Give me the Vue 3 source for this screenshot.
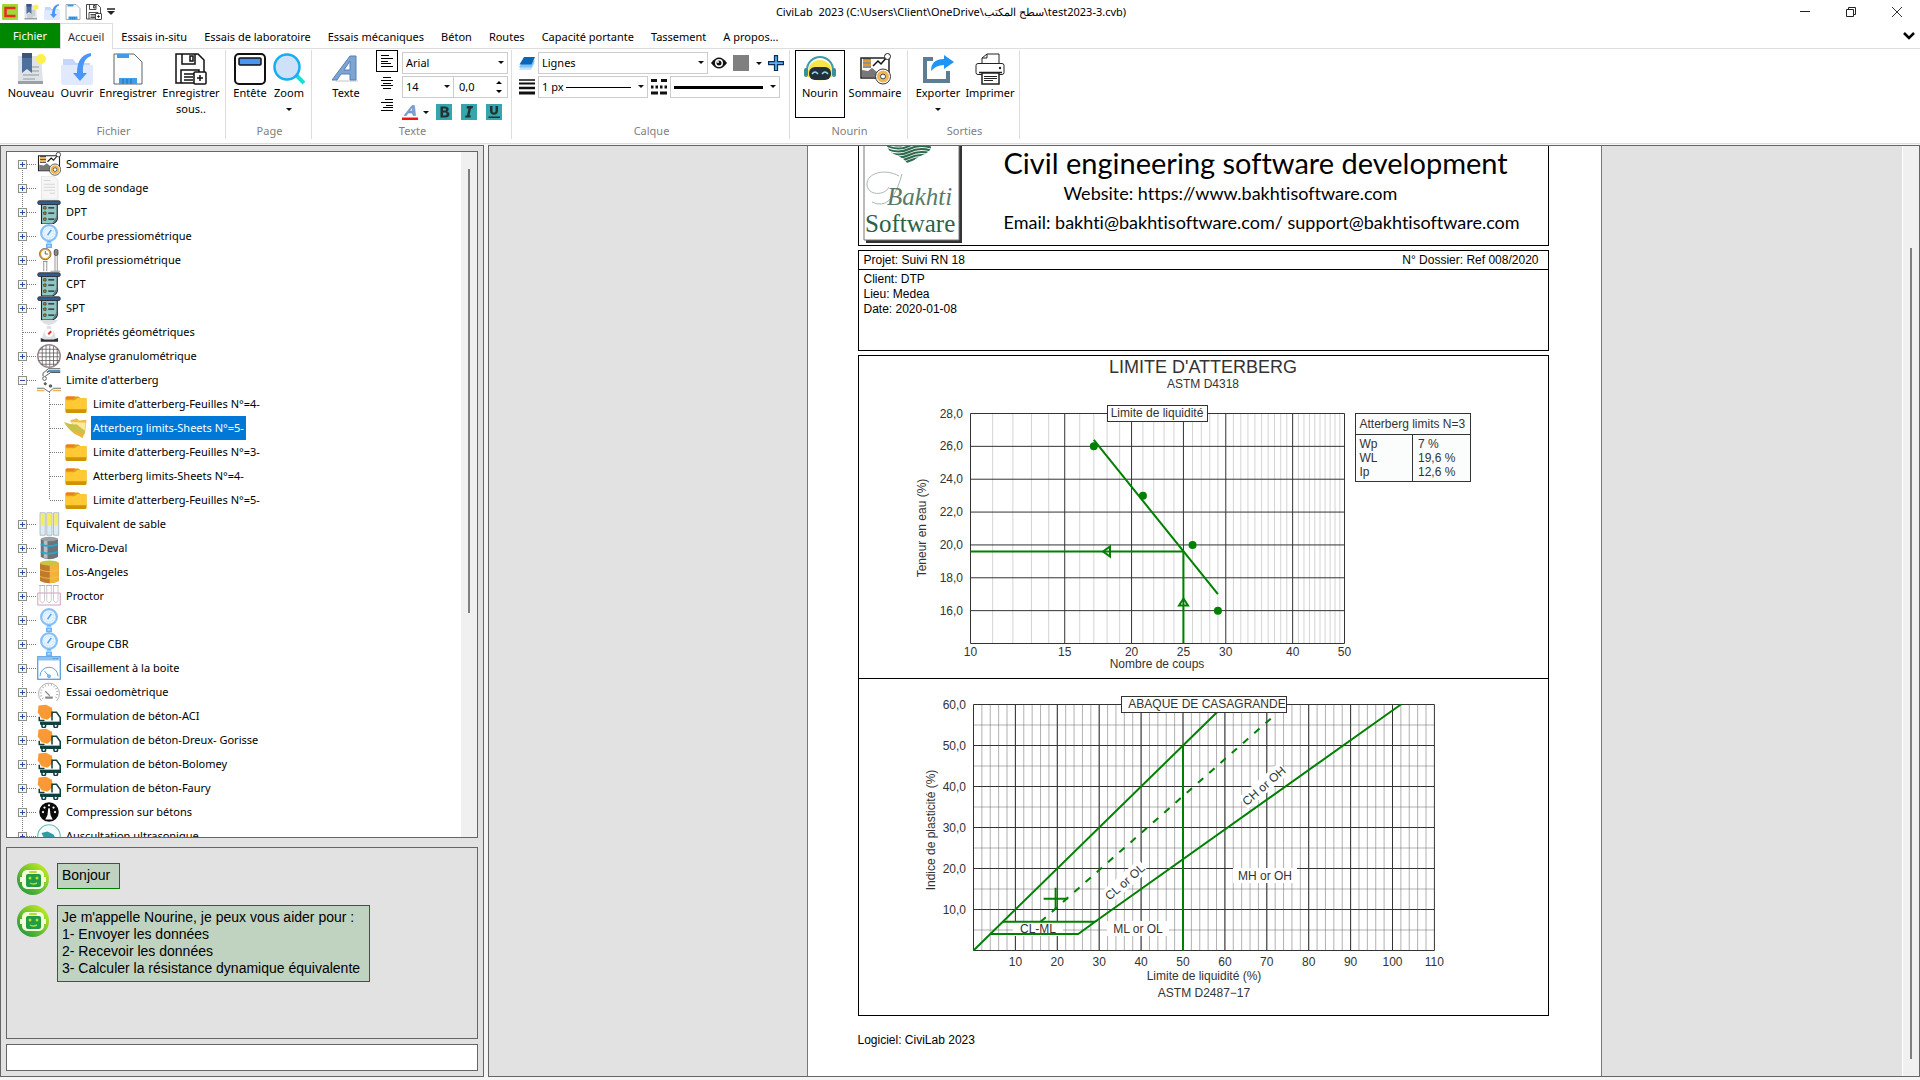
<script setup>
import { ref } from 'vue'

const icons = {
  app: '<rect width="32" height="32" rx="2" fill="#9fd83a"/><path d="M27 8H7v16h20" fill="none" stroke="#ee2a1c" stroke-width="5"/>',
  doc: '<path d="M3 29V3h23l2 26z" fill="#dfe2e6"/><path d="M3 28h25v3H3z" fill="#9aa0a6"/><path d="M17 14h7M17 18h7M8 22h16M8 26h12" stroke="#b9bec4" stroke-width="2"/><path d="M7 0h10v20l-5-4-5 4z" fill="#4f6f9d"/><path d="M7 0h10v5H7z" fill="#3b557e"/><circle cx="26" cy="6" r="5" fill="#fff04a"/>',
  open: '<path d="M2 6h10l3 4h14v6H2z" fill="#c4d6fb"/><path d="M0 12h32v17q0 3-3 3H3q-3 0-3-3z" fill="#e0e9fd"/><path d="M30 0Q16 2 16 20h-4l7 8 7-8h-4Q21 6 30 3z" fill="#4a95f7"/>',
  save: '<path d="M2 1h20l8 8v22H2z" fill="#fdfdfd" stroke="#5b6570" stroke-width="1"/><path d="M5 1h12v4H5z" fill="#3f9ce8"/><path d="M7 31v-6h18v6z" fill="#3f9ce8"/><path d="M11 26v5M15 26v5M19 26v5" stroke="#2b6ea8"/>',
  saveas: '<path d="M1 1h22l6 6v23H1z" fill="#fff" stroke="#111" stroke-width="1.500"/><path d="M7 1v10h13V1M15 3v5h3V3zM6 30V17h18v4M9 21h10M9 24h9M9 27h9" fill="none" stroke="#111" stroke-width="1.500"/><rect x="19" y="19" width="12" height="12" rx="1" fill="#fff" stroke="#111" stroke-width="1.500"/><path d="M25 22v6M22 25h6" stroke="#111" stroke-width="1.500"/>',
  entete: '<rect x="1" y="1" width="30" height="30" rx="4" fill="#fff" stroke="#111" stroke-width="2"/><rect x="5" y="5" width="22" height="7" rx="1" fill="#4a96ef" stroke="#111" stroke-width="1.500"/>',
  zoom: '<path d="M23 22l8 8" stroke="#0fe3d8" stroke-width="4"/><circle cx="14" cy="14" r="12.500" fill="#cfe1f8" stroke="#16aef0" stroke-width="2.500"/>',
  texte: '<path d="M6 28h22" stroke="#e2e2e2" stroke-width="2"/><path d="M2 27L20 3h6v24h-6v-6h-9l-4 6zM14 17h6V8z" fill="#7ea4d3" stroke="#5480b5" stroke-width="1"/>',
  color: '<path d="M4 23L20 3h5l2 20h-5l-1-5h-9l-3 5zM15 14h6l-1-7z" fill="#7da3d3" stroke="#5480b5"/><path d="M0 27h32v5H0z" fill="#f4160e"/>',
  bold: '<rect width="32" height="32" fill="#35a5ae"/><path d="M9 5h9c9 0 9 9 4 10 7 1 7 12-3 12H9zM14 9v4h4c3 0 3-4 0-4zM14 17v6h5c3 0 3-6 0-6z" fill="#233" fill-rule="evenodd"/>',
  italic: '<rect width="32" height="32" fill="#35a5ae"/><path d="M12 4h12l-1 5h-3l-3 14h3l-1 4H8l1-4h3l3-14h-4z" fill="#233"/>',
  under: '<rect width="32" height="32" fill="#35a5ae"/><path d="M8 4v10c0 10 16 10 16 0V4h-5v10c0 4-6 4-6 0V4zM5 25h23v3H5z" fill="#233"/>',
  layers: '<path d="M8 16h24l-8 14H0z" fill="#c3e4fb"/><path d="M8 11h24l-7 14H0z" fill="#7dc3f4"/><path d="M10 4h22l-7 15H1z" fill="#0d66b5"/>',
  weight: '<path d="M0 2h32" stroke="#111" stroke-width="3"/><path d="M0 9h32" stroke="#111" stroke-width="4"/><path d="M0 18h32" stroke="#111" stroke-width="5"/><path d="M0 28h32" stroke="#111" stroke-width="6"/>',
  dashes: '<path d="M0 3h12M20 3h12M0 28h14M18 28h14" stroke="#111" stroke-width="6"/><path d="M0 16h32" stroke="#111" stroke-width="6" stroke-dasharray="5 4"/>',
  eye: '<path d="M0 16Q16-6 32 16 16 38 0 16z" fill="#111"/><circle cx="16" cy="16" r="8" fill="#fff"/><circle cx="16" cy="16" r="5" fill="#111"/><circle cx="14" cy="14" r="2" fill="#fff"/>',
  plus: '<path d="M13 1h6v12h12v6H19v12h-6V19H1v-6h12z" fill="#5bb0f5" stroke="#0e2f55" stroke-width="2.500"/>',
  bot: '<path d="M4 19a12 12 0 0 1 24 0v5q-12 7-24 0z" fill="#fbe34c"/><path d="M3 17a13 13 0 0 1 26 0" fill="none" stroke="#3b9da6" stroke-width="2"/><rect x="0" y="15" width="4" height="9" rx="2" fill="#3b8f98"/><rect x="28" y="15" width="4" height="9" rx="2" fill="#3b8f98"/><rect x="5" y="14" width="22" height="13" rx="6" fill="#22303c"/><path d="M8 21q3-4 6 0M18 21q3-4 6 0" fill="none" stroke="#9fd5e6" stroke-width="1.500"/>',
  summary: '<path d="M2 5h28v20H2z" fill="#fff" stroke="#222" stroke-width="1.500"/><path d="M3 17l6 1 4-3 5 4v5H3z" fill="#777"/><path d="M4 8h8M4 12h8" stroke="#e59a2f" stroke-width="2"/><path d="M4 6h8M4 10h8M4 14h8" stroke="#222" stroke-width="1"/><path d="M14 13l5-5 3 3 6-7" fill="none" stroke="#111" stroke-width="1.500"/><circle cx="28.500" cy="3.500" r="3" fill="#fff" stroke="#222"/><circle cx="24" cy="23.500" r="7.500" fill="#fff" stroke="#333" stroke-width="1"/><circle cx="24" cy="23.500" r="4.500" fill="none" stroke="#f2b44d" stroke-width="3"/><circle cx="24" cy="23.500" r="2.500" fill="#fff" stroke="#333"/>',
  export: '<path d="M11 6H3v22h23V18" fill="none" stroke="#5f7d92" stroke-width="4"/><path d="M9 18Q9 6 22 6V2l10 7-10 7v-4Q14 12 9 18z" fill="#1f94f3"/>',
  print: '<path d="M8 11V5l5-4h12v10M8 5h5V1" fill="#fff" stroke="#222" stroke-width="1"/><rect x="2" y="10.500" width="28" height="11" rx="2" fill="#fff" stroke="#222" stroke-width="1"/><path d="M5 19.500h23" stroke="#222" stroke-width="1.500"/><path d="M8 20h17v11H8z" fill="#fff" stroke="#222" stroke-width="1.500"/><path d="M10 23.500h13M10 25.500h13M10 27.500h9" stroke="#222"/><circle cx="26" cy="15" r="1.200" fill="#222"/>',
  log: '<path d="M6 0h16l6 6v25H6z" fill="#f6f6f6" stroke="#ddd"/><path d="M9 6h9M9 11h15M9 15h15M9 19h15M17 23h7" stroke="#ccc"/>',
  probe: '<path d="M6 5h21v21q-2 5-7 6H6z" fill="#8fc7c5" stroke="#222" stroke-width="1.500"/><path d="M20 32q7-3 7-12z" fill="#5b7a85"/><rect x="1" y="1" width="30" height="5" rx="2" fill="#2d5d91" stroke="#222"/><path d="M9 9h3v3H9zM9 16h3v3H9zM9 24h3v3H9z" fill="#f2b21c" stroke="#222"/><path d="M15 10.500h8M15 17.500h8M15 25.500h8" stroke="#222" stroke-width="1.500"/>',
  gauge: '<circle cx="16" cy="12" r="10.500" fill="#e9f4ff" stroke="#86c0fa" stroke-width="3"/><circle cx="16" cy="12" r="6.500" fill="none" stroke="#a9d2fb" stroke-dasharray="2 2"/><path d="M14 15l5-7" stroke="#58a5f3" stroke-width="2"/><path d="M13 24h6M13 27h6v4h-6z" stroke="#6db2f7" stroke-width="2" fill="#bfe0ff"/>',
  profile: '<circle cx="11" cy="8" r="6.500" fill="#fff" stroke="#e8a526" stroke-width="2"/><circle cx="11" cy="8" r="7.700" fill="none" stroke="#333" stroke-width=".8"/><path d="M11 4v4h4" fill="none" stroke="#333"/><path d="M8 18h6M9 18v13M13 18v13M24 10v21M27 10v21M18 31h13" stroke="#777" fill="none"/><rect x="23" y="2" width="5" height="8" rx="2" fill="#888" stroke="#333"/>',
  scale: '<path d="M4 0q12 13 24 0z" fill="#dde0e3"/><path d="M13 8h6v4q6 4 6 14H7q0-10 6-14z" fill="#dfe2e5"/><circle cx="16" cy="17" r="5.500" fill="#fff"/><path d="M15 19l4-4" stroke="#e5322d" stroke-width="2.500"/><path d="M5 24l5 2h12l6-2v5H5z" fill="#2e3236"/>',
  sieve: '<circle cx="16" cy="16" r="15" fill="#fff" stroke="#9d8790" stroke-width="2"/><path d="M7 4v24M12 2v28M17 2v28M22 3v26M27 6v20M4 7h24M2 12h28M2 17h28M2 22h28M6 27h20" stroke="#555"/>',
  pour: '<path d="M31 4H16l-3 2" fill="none" stroke="#2b6ea0" stroke-width="2"/><path d="M31 1H15L8 7v4M31 6H18l-7 5" fill="none" stroke="#222"/><circle cx="10" cy="14" r="2.500" fill="#fff" stroke="#333"/><circle cx="11" cy="21" r="1.500" fill="#587" stroke="#333"/><circle cx="18" cy="24" r="1.700" fill="#587" stroke="#333"/><path d="M0 27h9l7 5 6-5h10" fill="none" stroke="#444"/><path d="M0 30h10M21 30h11" stroke="#f0b35a" stroke-width="2"/>',
  folder: '<path d="M2 8q0-2 2-2h15l3 2h7q1 0 1 2v14H2z" fill="#e0a010"/><path d="M3 6h12l-3 3H2q0-2 1-3z" fill="#ef7b1a"/><path d="M2 11h12l4-3h12v17q0 2-2 2H4q-2 0-2-2z" fill="#ffc933"/><path d="M2 23h28v3q0 2-2 2H4q-2 0-2-2z" fill="#cf9400"/>',
  folderopen: '<path d="M8 6l9-3 3 3 10-1-2 18-5 6z" fill="#f3bd48"/><path d="M10 8l19 1-3 16-4 2z" fill="#fbeba0"/><path d="M0 8q9 4 17 3l11 9-3 9-12-6Q4 16 0 8z" fill="#c9c24a"/><path d="M13 23l12 6 1-5-10-5z" fill="#e9b83a"/>',
  tubes: '<path d="M4 1h7v30H4zM13 1h7v30h-7zM22 1h7v30h-7z" fill="#d6ecf8" stroke="#aaa"/><path d="M5 2h5v16H5zM14 2h5v16h-5zM23 2h5v16h-5z" fill="#f5ee5a"/>',
  drum: '<path d="M5 4v24q11 6 23 0V4z" fill="#6d7479"/><path d="M9 5v25h5V5z" fill="#b7bdc1"/><ellipse cx="16.500" cy="4" rx="11.500" ry="3" fill="#9aa1a5"/><path d="M5 11q11 5 23 0M5 21q11 5 23 0" fill="none" stroke="#26a7cf" stroke-width="2.500"/>',
  barrel: '<path d="M4 4v24q12 6 25 0V4z" fill="#c17a2c"/><path d="M17 6v25q7 0 12-3V4z" fill="#f5b23a"/><ellipse cx="16.500" cy="4" rx="12.500" ry="3.500" fill="#c7c73f"/><path d="M4 13q12 5 25 0M4 22q12 5 25 0" fill="none" stroke="#e8cc51" stroke-width="1"/>',
  rack: '<path d="M1 12h30v16H1z" fill="none" stroke="#c77fae"/><path d="M4 2v20q3 6 6 0V2zM13 2v20q3 6 6 0V2zM22 2v20q3 6 6 0V2z" fill="none" stroke="#bbb"/><path d="M3 2h8M12 2h8M21 2h8" stroke="#cab" stroke-width="1.500"/>',
  window: '<rect x="1" y="1" width="30" height="30" fill="#fff" stroke="#3d8fd9" stroke-width="1.500"/><path d="M1 1h30v5H1z" fill="#8cc3f3"/><path d="M21 3.500h7" stroke="#2a6fb0" stroke-dasharray="1 1"/><path d="M4 27a12 12 0 0 1 24 0M10 20l6 7" fill="none" stroke="#4a97dc" stroke-width="1.200"/><circle cx="16" cy="27" r="2" fill="#8cc3f3" stroke="#4a97dc"/>',
  meter: '<path d="M6 28a14 14 0 1 1 20 0" fill="none" stroke="#aaa" stroke-width="1.200"/><path d="M8 25a11 11 0 1 1 16 0" fill="none" stroke="#aaa" stroke-width="3" stroke-dasharray="1 3"/><path d="M11 15l6 6" stroke="#888" stroke-width="1.500"/><path d="M11 22h10v3H11z" fill="#888"/>',
  truck: '<path d="M2 2l10-1 8 4 1 10-7 6-8-2-5-8z" fill="#fb9a35"/><path d="M3 17v5h7M20 22V11h6l5 7v9H5" fill="none" stroke="#0f3f40" stroke-width="2"/><path d="M4 23.500h27v4H4z" fill="#0f3f40"/><circle cx="9" cy="29" r="2.500" fill="#fff" stroke="#0f3f40" stroke-width="2"/><circle cx="25" cy="29" r="2.500" fill="#fff" stroke="#0f3f40" stroke-width="2"/>',
  dial: '<circle cx="16" cy="16" r="13" fill="#0b0b0b"/><circle cx="8" cy="16" r="1.500" fill="#fff"/><circle cx="10" cy="10" r="1.500" fill="#fff"/><circle cx="16" cy="7" r="1.500" fill="#fff"/><circle cx="22" cy="10" r="1.500" fill="#fff"/><circle cx="24" cy="16" r="1.500" fill="#fff"/><path d="M15 11h2l1 9 3 6H11l3-6z" fill="#fff"/>',
  ultra: '<circle cx="16" cy="16" r="15" fill="#f5fcfc" stroke="#6fb9bd" stroke-width="1.500"/><path d="M6 12l8-2 8 4 4 8-8-2-8 0z" fill="#2f9ba4"/>',
  avatar: '<defs><linearGradient id="lime" x1="1" y1="0" x2="0" y2="1"><stop offset="0" stop-color="#d6f51e"/><stop offset="1" stop-color="#0f8f3e"/></linearGradient></defs><circle cx="16" cy="16" r="16" fill="url(#lime)"/><rect x="5" y="7" width="22" height="19" rx="5" fill="#f2ffd8"/><rect x="9" y="11" width="15" height="13" rx="2" fill="#239a46"/><rect x="12" y="8" width="8" height="2" rx="1" fill="#b9dc30"/><circle cx="13" cy="15" r="1.500" fill="#a9e32c"/><circle cx="20" cy="15" r="1.500" fill="#a9e32c"/><path d="M13 20q3 2 7 0" fill="none" stroke="#a9e32c" stroke-width="1.500"/><path d="M4 14v5M28 14v5" stroke="#f2ffd8" stroke-width="2"/>'
}

const quick = [
  { icon: 'doc', label: 'Nouveau' },
  { icon: 'open', label: 'Ouvrir' },
  { icon: 'save', label: 'Enregistrer' },
  { icon: 'saveas', label: 'Enregistrer sous' }
]
const tabs = ['Essais in-situ', 'Essais de laboratoire', 'Essais mécaniques', 'Béton', 'Routes', 'Capacité portante', 'Tassement', 'A propos...']

const tree = [
  { t: 'Sommaire', i: 'summary' },
  { t: 'Log de sondage', i: 'log' },
  { t: 'DPT', i: 'probe' },
  { t: 'Courbe pressiométrique', i: 'gauge' },
  { t: 'Profil pressiométrique', i: 'profile' },
  { t: 'CPT', i: 'probe' },
  { t: 'SPT', i: 'probe' },
  { t: 'Propriétés géométriques', i: 'scale', leaf: true },
  { t: 'Analyse granulométrique', i: 'sieve' },
  { t: "Limite d'atterberg", i: 'pour', open: true },
  { t: "Limite d'atterberg-Feuilles N°=4-", i: 'folder', child: true },
  { t: 'Atterberg limits-Sheets N°=5-', i: 'folderopen', child: true, selected: true },
  { t: "Limite d'atterberg-Feuilles N°=3-", i: 'folder', child: true },
  { t: 'Atterberg limits-Sheets N°=4-', i: 'folder', child: true },
  { t: "Limite d'atterberg-Feuilles N°=5-", i: 'folder', child: true, last: true },
  { t: 'Equivalent de sable', i: 'tubes' },
  { t: 'Micro-Deval', i: 'drum' },
  { t: 'Los-Angeles', i: 'barrel' },
  { t: 'Proctor', i: 'rack' },
  { t: 'CBR', i: 'gauge' },
  { t: 'Groupe CBR', i: 'gauge' },
  { t: 'Cisaillement à la boite', i: 'window' },
  { t: 'Essai oedomètrique', i: 'meter' },
  { t: 'Formulation de béton-ACI', i: 'truck' },
  { t: 'Formulation de béton-Dreux- Gorisse', i: 'truck' },
  { t: 'Formulation de béton-Bolomey', i: 'truck' },
  { t: 'Formulation de béton-Faury', i: 'truck' },
  { t: 'Compression sur bétons', i: 'dial' },
  { t: 'Auscultation ultrasonique', i: 'ultra' }
]

const message = ref('')
const spacing = ref('0,0')

// Liquid limit chart: logarithmic blow count against water content
const lx = v => 111.5 + (374 * Math.log(v / 10)) / Math.log(5)
const ly = v => 252.5 - ((v - 14) * 230) / 14
const range = (a, b, s = 1) => Array.from({ length: Math.floor((b - a) / s) + 1 }, (_, i) => a + i * s)
const lMajorX = [10, 15, 20, 25, 30, 40, 50]
const lMinorX = range(11, 49).filter(v => !lMajorX.includes(v))
const lMajorY = range(16, 28, 2)
const samples = [[17, 26], [21, 23], [26, 20], [29, 16]]

// Casagrande chart: liquid limit against plasticity index
const cx = v => 114.5 + v * 4.19
const cy = v => 271.5 - v * 4.1
const pts = list => list.map(([x, y]) => `${cx(x)},${cy(y)}`).join(' ')
const zones = [
  { t: 'CL-ML', x: 179, y: 250, w: 50, r: 0 },
  { t: 'ML or OL', x: 279, y: 250, w: 62, r: 0 },
  { t: 'MH or OH', x: 406, y: 197, w: 64, r: 0 },
  { t: 'CL or OL', x: 266, y: 203, w: 50, r: -41 },
  { t: 'CH or OH', x: 405, y: 107, w: 54, r: -41 }
]
</script>

<template>
  <div class="app">
    <header class="titlebar">
      <div class="quick">
        <svg class="i16" viewBox="0 0 32 32" v-html="icons.app"></svg>
        <button v-for="q in quick" :key="q.icon" class="plain" :aria-label="q.label">
          <svg class="i16" viewBox="0 0 32 32" v-html="icons[q.icon]"></svg>
        </button>
        <button class="plain" aria-label="Personnaliser"><svg width="8" height="8" viewBox="0 0 8 8"><path d="M0 1h8" stroke="#222" stroke-width="1.500" /><path d="M0 3h8L4 7z" fill="#222" /></svg></button>
      </div>
      <h1>CiviLab&nbsp; 2023 (C:\Users\Client\OneDrive\سطح المكتب\test2023-3.cvb)</h1>
      <div class="winbtns">
        <button aria-label="Réduire"><svg width="12" height="12" viewBox="0 0 12 12"><path d="M1 5.500h10" stroke="#222" /></svg></button>
        <button aria-label="Restaurer"><svg width="12" height="12" viewBox="0 0 12 12" fill="none" stroke="#222"><path d="M1.500 3.500h7v7h-7zM3.500 3.500v-2h7v7h-2" /></svg></button>
        <button aria-label="Fermer"><svg width="12" height="12" viewBox="0 0 12 12" stroke="#333"><path d="M1 1l10 10M11 1L1 11" /></svg></button>
      </div>
    </header>

    <nav class="tabs">
      <button class="file">Fichier</button>
      <button class="active">Accueil</button>
      <button v-for="t in tabs" :key="t">{{ t }}</button>
      <button class="collapse" aria-label="Réduire le ruban"><svg width="14" height="8" viewBox="0 0 14 8"><path d="M2 1l5 5 5-5" fill="none" stroke="#000" stroke-width="2.500" /></svg></button>
    </nav>

    <section class="ribbon">
      <div class="group">
        <div class="body">
          <button class="big w52"><svg class="i32" viewBox="0 0 32 32" v-html="icons.doc"></svg><span>Nouveau</span></button>
          <button class="big w38"><svg class="i32" viewBox="0 0 32 32" v-html="icons.open"></svg><span>Ouvrir</span></button>
          <button class="big w62"><svg class="i32" viewBox="0 0 32 32" v-html="icons.save"></svg><span>Enregistrer</span></button>
          <button class="big w62"><svg class="i32" viewBox="0 0 32 32" v-html="icons.saveas"></svg><span>Enregistrer<br>sous..</span></button>
        </div>
        <p>Fichier</p>
      </div>
      <div class="group">
        <div class="body">
          <button class="big w38"><svg class="i32" viewBox="0 0 32 32" v-html="icons.entete"></svg><span>Entête</span></button>
          <button class="big w38"><svg class="i32" viewBox="0 0 32 32" v-html="icons.zoom"></svg><span>Zoom</span><i class="caret"></i></button>
        </div>
        <p>Page</p>
      </div>
      <div class="group">
        <div class="body">
          <button class="big w58"><svg class="i32" viewBox="0 0 32 32" v-html="icons.texte"></svg><span>Texte</span></button>
          <div class="aligns">
            <button class="on" aria-label="Aligner à gauche"><svg width="12" height="12" viewBox="0 0 12 12"><path d="M0 .5h8M0 3.500h12M0 6.500h7M0 8.500h10M0 11.500h12" stroke="#000" /></svg></button>
            <button aria-label="Centrer"><svg width="12" height="12" viewBox="0 0 12 12"><path d="M2 .5h8M0 3.500h12M2 6.500h8M0 8.500h12M2 11.500h8" stroke="#000" /></svg></button>
            <button aria-label="Aligner à droite"><svg width="12" height="12" viewBox="0 0 12 12"><path d="M4 .5h8M0 3.500h12M5 6.500h7M2 8.500h10M0 11.500h12" stroke="#000" /></svg></button>
          </div>
          <div class="fonts">
            <span class="select"><select aria-label="Police"><option>Arial</option></select></span>
            <div class="pair">
              <span class="select size"><select aria-label="Taille"><option>14</option></select></span>
              <span class="spin"><input v-model="spacing" aria-label="Espacement"><svg width="6" height="14" viewBox="0 0 6 14"><path d="M0 4l3-3 3 3zM0 10l3 3 3-3z" /></svg></span>
            </div>
            <div class="styles">
              <button class="plain" aria-label="Couleur du texte"><svg class="i16" viewBox="0 0 32 32" v-html="icons.color"></svg></button>
              <i class="caret"></i>
              <button class="plain" aria-label="Gras"><svg class="i16" viewBox="0 0 32 32" v-html="icons.bold"></svg></button>
              <button class="plain" aria-label="Italique"><svg class="i16" viewBox="0 0 32 32" v-html="icons.italic"></svg></button>
              <button class="plain" aria-label="Souligné"><svg class="i16" viewBox="0 0 32 32" v-html="icons.under"></svg></button>
            </div>
          </div>
        </div>
        <p>Texte</p>
      </div>
      <div class="group">
        <div class="body calque">
          <div class="line">
            <svg class="i16" viewBox="0 0 32 32" v-html="icons.layers"></svg>
            <span class="select layer"><select aria-label="Calque"><option>Lignes</option></select></span>
            <button class="plain" aria-label="Afficher"><svg class="i16" viewBox="0 0 32 32" v-html="icons.eye"></svg></button>
            <button class="plain swatch" aria-label="Couleur du calque"></button>
            <i class="caret"></i>
            <button class="plain" aria-label="Ajouter un calque"><svg class="i16" viewBox="0 0 32 32" v-html="icons.plus"></svg></button>
          </div>
          <div class="line">
            <svg class="i16" viewBox="0 0 32 32" v-html="icons.weight"></svg>
            <span class="select stroke thin"><select aria-label="Épaisseur"><option>1 px</option></select></span>
            <svg class="i16" viewBox="0 0 32 32" v-html="icons.dashes"></svg>
            <span class="select stroke thick"><select aria-label="Type de ligne"><option label=" "></option></select></span>
          </div>
        </div>
        <p>Calque</p>
      </div>
      <div class="group">
        <div class="body">
          <button class="big w50 boxed"><svg class="i32" viewBox="0 0 32 32" v-html="icons.bot"></svg><span>Nourin</span></button>
          <button class="big w58"><svg class="i32" viewBox="0 0 32 32" v-html="icons.summary"></svg><span>Sommaire</span></button>
        </div>
        <p>Nourin</p>
      </div>
      <div class="group">
        <div class="body">
          <button class="big w50"><svg class="i32" viewBox="0 0 32 32" v-html="icons.export"></svg><span>Exporter</span><i class="caret"></i></button>
          <button class="big w52"><svg class="i32" viewBox="0 0 32 32" v-html="icons.print"></svg><span>Imprimer</span></button>
        </div>
        <p>Sorties</p>
      </div>
    </section>

    <main>
      <aside class="side">
        <div class="treebox">
          <ul role="tree">
            <li v-for="(n, k) in tree" :key="k" role="treeitem" :aria-selected="!!n.selected">
              <svg :width="n.child ? 57 : 30" height="24" class="guide">
                <g stroke="#7a7a7a" stroke-dasharray="1 1">
                  <path :d="k ? 'M15.500 0v24' : 'M15.500 12v12'" />
                  <path v-if="n.child" :d="n.last ? 'M42.500 0v12' : 'M42.500 0v24'" />
                  <path :d="n.child ? 'M43 12.500h14' : 'M16 12.500h14'" />
                </g>
                <g v-if="!n.child && !n.leaf">
                  <rect x="11.500" y="8.500" width="8" height="8" fill="#f7f7f7" stroke="#8f8f8f" />
                  <path d="M13 12.500h5" stroke="#2b4aa0" />
                  <path v-if="!n.open" d="M15.500 10v5" stroke="#2b4aa0" />
                </g>
              </svg>
              <svg class="i24" viewBox="0 0 32 32" v-html="icons[n.i]"></svg>
              <span :class="{ selected: n.selected }">{{ n.t }}</span>
            </li>
          </ul>
          <div class="track"><i></i></div>
        </div>
        <div class="chat">
          <div class="msg">
            <svg class="i32" viewBox="0 0 32 32" v-html="icons.avatar"></svg>
            <p>Bonjour</p>
          </div>
          <div class="msg">
            <svg class="i32" viewBox="0 0 32 32" v-html="icons.avatar"></svg>
            <p>Je m'appelle Nourine, je peux vous aider pour :<br>1- Envoyer les données<br>2- Recevoir les données<br>3- Calculer la résistance dynamique équivalente</p>
          </div>
        </div>
        <input v-model="message" class="prompt" aria-label="Message">
      </aside>

      <section class="viewer">
        <article class="sheet">
          <header class="letterhead">
            <svg class="logo" width="99" height="98" viewBox="0 0 99 98">
              <defs><clipPath id="heart"><path d="M24 0h44q1 4-6 8-11 4-16 12-4-8-15-12-6-3-7-8z" /></clipPath></defs>
              <path d="M3 0h96v97H3z" fill="#333" />
              <path d="M1 -2h95v96H1z" fill="#fff" stroke="#777" />
              <path clip-path="url(#heart)" d="M20 -8q14 8 26 2t26 0M20 -5q14 8 26 2t26 0M20 -2q14 8 26 2t26 0M20 1q14 8 26 2t26 0M20 4q14 8 26 2t26 0M20 7q14 8 26 2t26 0M20 10q14 8 26 2t26 0M20 13q14 8 26 2t26 0" fill="none" stroke="#2f6b4f" stroke-width="2" />
              <path d="M36 30C22 22 4 27 4 38c0 12 18 12 22 3M9 56q20 10 30-28" fill="none" stroke="#a9b8b0" />
              <text x="24" y="59" font-family="'Liberation Serif', serif" font-style="italic" font-size="25" fill="#587a69">Bakhti</text>
              <text x="2" y="86" font-family="'Liberation Serif', serif" font-size="25" fill="#2a6247">Software</text>
            </svg>
            <div class="contact">
              <h2>Civil engineering software development</h2>
              <p class="web">Website: https://www.bakhtisoftware.com</p>
              <p>Email: bakhti@bakhtisoftware.com/ support@bakhtisoftware.com</p>
            </div>
          </header>

          <section class="project">
            <div class="ref"><span>Projet: Suivi RN 18</span><span>N° Dossier: Ref 008/2020</span></div>
            <p>Client: DTP<br>Lieu: Medea<br>Date: 2020-01-08</p>
          </section>

          <section class="results">
            <div class="liquid">
              <h3>LIMITE D'ATTERBERG</h3>
              <p class="norm">ASTM D4318</p>
              <div class="row">
                <svg width="496" height="287" viewBox="0 0 496 287">
                  <path v-for="v in lMinorX" :key="'m' + v" :d="`M${lx(v)} 22.500V252.500`" stroke="#d4d4d4" />
                  <g stroke="#333">
                    <path v-for="v in lMajorX" :key="v" :d="`M${lx(v)} 22.500V252.500`" />
                    <path v-for="v in [14, ...lMajorY]" :key="'y' + v" :d="`M111.500 ${ly(v)}h374`" />
                  </g>
                  <text v-for="v in lMajorY" :key="'t' + v" x="104" :y="ly(v) + 4" text-anchor="end">{{ v }},0</text>
                  <text v-for="v in lMajorX" :key="'x' + v" :x="lx(v)" y="265" text-anchor="middle">{{ v }}</text>
                  <text x="298" y="277" text-anchor="middle">Nombre de coups</text>
                  <text transform="translate(67 137) rotate(-90)" text-anchor="middle">Teneur en eau (%)</text>
                  <rect x="248.500" y="14.500" width="100" height="16" fill="#fff" stroke="#333" />
                  <text x="298" y="26" text-anchor="middle">Limite de liquidité</text>
                  <g fill="none" stroke="#008000" stroke-width="2">
                    <path :d="`M${lx(17)} ${ly(26.4)}L${lx(29)} ${ly(17)}`" />
                    <path :d="`M${lx(10)} ${ly(19.6)}H${lx(25)}V${ly(14)}`" />
                    <path d="M244 160.500l7-5v10zM320 214.500h9l-4.500-7z" />
                  </g>
                  <circle v-for="p in samples" :key="p[0]" :cx="lx(p[0])" :cy="ly(p[1])" r="4" fill="#008000" />
                </svg>
                <table>
                  <thead><tr><th colspan="2">Atterberg limits N=3</th></tr></thead>
                  <tbody>
                    <tr><td>Wp</td><td>7 %</td></tr>
                    <tr><td>WL</td><td>19,6 %</td></tr>
                    <tr><td>Ip</td><td>12,6 %</td></tr>
                  </tbody>
                </table>
              </div>
            </div>
            <div class="casagrande">
              <svg width="688" height="336" viewBox="0 0 688 336">
                <g stroke="#666" stroke-opacity=".5">
                  <path v-for="v in range(2, 108, 2)" :key="'a' + v" :d="`M${cx(v)} 25.500V271.500`" />
                  <path v-for="v in range(5, 55, 10)" :key="'b' + v" :d="`M114.500 ${cy(v)}H${cx(110)}`" />
                </g>
                <g stroke="#333">
                  <path v-for="v in range(0, 110, 10)" :key="'c' + v" :d="`M${cx(v)} 25.500V271.500`" />
                  <path v-for="v in range(0, 60, 10)" :key="'d' + v" :d="`M114.500 ${cy(v)}H${cx(110)}`" />
                </g>
                <g v-for="z in zones" :key="z.t" :transform="`translate(${z.x} ${z.y}) rotate(${z.r})`">
                  <rect :x="-z.w / 2" y="-8" :width="z.w" height="15" fill="#fff" />
                  <text y="4" text-anchor="middle">{{ z.t }}</text>
                </g>
                <g fill="none" stroke="#008000" stroke-width="2">
                  <polyline :points="pts([[0, 0], [60, 60]])" />
                  <polyline :points="pts([[7, 7], [29, 7], [25, 4], [4, 4]])" />
                  <polyline :points="pts([[29, 7], [102, 60]])" />
                  <polyline :points="pts([[50, 50], [50, 0]])" />
                  <polyline :points="pts([[16, 7], [72, 57.5]])" stroke-dasharray="7 8" />
                  <path :d="`M${cx(19.6) - 12} ${cy(12.6)}h24M${cx(19.6)} ${cy(12.6) - 11}v22`" />
                </g>
                <rect x="262.500" y="17.500" width="165" height="16" fill="#fff" stroke="#333" />
                <text x="348" y="29" text-anchor="middle">ABAQUE DE CASAGRANDE</text>
                <text v-for="v in range(10, 60, 10)" :key="'e' + v" x="107" :y="cy(v) + 4" text-anchor="end">{{ v }},0</text>
                <text v-for="v in range(10, 110, 10)" :key="'f' + v" :x="cx(v)" y="287" text-anchor="middle">{{ v }}</text>
                <text x="345" y="301" text-anchor="middle">Limite de liquidité (%)</text>
                <text x="345" y="318" text-anchor="middle">ASTM D2487−17</text>
                <text transform="translate(76 151) rotate(-90)" text-anchor="middle">Indice de plasticité (%)</text>
              </svg>
            </div>
          </section>
          <p class="soft">Logiciel: CiviLab 2023</p>
        </article>
        <div class="track"><i></i></div>
      </section>
    </main>
  </div>
</template>

<style>
body { margin: 0; }
</style>

<style scoped>
* { box-sizing: border-box; }
p, h1, h2, h3, ul { margin: 0; padding: 0; font-weight: 400; }
svg { display: block; flex: none; }
button, select, input { font: inherit; color: inherit; background: none; border: 0; padding: 0; margin: 0; }
.app { height: 100vh; display: flex; flex-direction: column; overflow: hidden; background: #fff; color: #000; font: 11px/16px "Noto Sans", "Open Sans", sans-serif; }
.i16 { width: 16px; height: 16px; }
.i24 { width: 24px; height: 24px; }
.i32 { width: 32px; height: 32px; }
.plain { display: flex; }

.titlebar { display: grid; grid-template-columns: 1fr auto 1fr; height: 23px; align-items: center; flex: none; }
.quick { display: flex; align-items: center; gap: 5px; padding-left: 2px; }
.titlebar h1 { font-size: 11px; line-height: 23px; margin-right: 18px; }
.winbtns { display: flex; justify-content: flex-end; }
.winbtns button { width: 46px; height: 23px; display: flex; align-items: center; justify-content: center; }

.tabs { display: flex; flex: none; height: 26px; border-bottom: 1px solid #ddd; }
.tabs button { padding: 2px 9px 0 8px; white-space: nowrap; }
.tabs .file { width: 60px; background: #008700; color: #fff; padding: 0; }
.tabs .active { border: 1px solid #ddd; border-bottom: 0; background: #fff; height: 26px; color: #333; padding: 1px 8px 0 7px; }
.tabs .collapse { margin-left: auto; padding: 0 4px; }

.ribbon { display: flex; flex: none; height: 95px; border-bottom: 1px solid #ddd; }
.group { border-right: 1px solid #ddd; margin: 1px 0 4px; padding: 0 3px 0 5px; display: flex; flex-direction: column; justify-content: space-between; }
.group > p { text-align: center; color: #808080; line-height: 16px; }
.body { display: flex; gap: 1px; height: 68px; }
.big { display: flex; flex-direction: column; align-items: center; padding-top: 3px; white-space: nowrap; }
.big span { line-height: 16px; text-align: center; }
.boxed { border: 1px solid #000; padding-top: 2px; }
.w38 { width: 38px; }
.w50 { width: 50px; }
.w52 { width: 52px; }
.w58 { width: 58px; }
.w62 { width: 62px; }
.caret { width: 0; height: 0; border: 3px solid transparent; border-top: 3px solid #111; border-bottom: 0; }
.big .caret { margin-top: 7px; }
.aligns { display: flex; flex-direction: column; }
.aligns button { width: 22px; height: 22px; display: flex; align-items: center; justify-content: center; }
.aligns .on { border: 1px solid #000; }
.fonts { width: 109px; padding: 2px 0 0 3px; display: flex; flex-direction: column; gap: 2px; }
.fonts > * { flex: none; }
.select { position: relative; display: flex; height: 22px; border: 1px solid #ccc; }
.select select { appearance: none; width: 100%; padding: 0 14px 0 3px; }
.select::after { content: ""; position: absolute; right: 3px; top: 8px; border: 3px solid transparent; border-top-color: #111; border-bottom: 0; pointer-events: none; }
.pair { display: flex; }
.size { width: 52px; }
.spin { display: flex; flex: 1; align-items: center; height: 22px; border: 1px solid #ccc; border-left: 0; padding: 0 5px; }
.spin input { width: 100%; min-width: 0; }
.styles { display: flex; align-items: center; padding-top: 4px; gap: 9px; }
.styles .caret { margin: 0 -2px 0 -4px; }
.calque { width: 269px; flex-direction: column; gap: 2px; padding: 2px 2px 0; }
.line { display: flex; align-items: center; gap: 3px; }
.layer { width: 170px; }
.swatch { width: 16px; height: 16px; background: #808080; margin: 0 4px 0 3px; }
.line .caret { margin-right: 3px; }
.stroke { width: 110px; }
.stroke::before { content: ""; position: absolute; top: 9px; right: 16px; height: 3px; left: 3px; background: #000; pointer-events: none; }
.thin::before { left: 27px; height: 1px; top: 10px; }

main { flex: 1; min-height: 0; display: grid; grid-template-columns: 484px minmax(0, 1fr); gap: 4px; padding: 1px 0 3px; background: #f5f5f5; }
.side { border: 1px solid #666; background: #e2e2e2; padding: 5px; display: flex; flex-direction: column; min-height: 0; }
.treebox { flex: 1; min-height: 0; border: 1px solid #666; background: #fff; display: flex; overflow: hidden; }
.treebox ul { flex: 1; list-style: none; }
.treebox li { display: flex; align-items: center; height: 24px; white-space: nowrap; }
.treebox li span { margin-left: 3px; padding: 0 2px; line-height: 24px; }
.treebox .selected { background: #0078d7; color: #fff; }
.track { background: #f0f0f0; width: 16px; padding: 17px 7px; }
.track i { display: block; width: 2px; height: 444px; background: #808080; }
.chat { flex: none; height: 192px; margin-top: 9px; border: 1px solid #666; padding: 15px 10px; display: flex; flex-direction: column; gap: 10px; font: 14px/17px "Liberation Sans", Arial, sans-serif; }
.msg { display: flex; align-items: flex-start; gap: 8px; }
.msg p { border: 1px solid #008000; background: #c0d3c0; padding: 3px 9px 4px 4px; white-space: nowrap; }
.prompt { flex: none; height: 27px; margin-top: 5px; border: 1px solid #666; background: #fff; padding: 0 5px; }

.viewer { position: relative; border: 1px solid #666; background: #e2e2e2; display: flex; justify-content: center; overflow: hidden; min-height: 0; font: 12px/15px "Liberation Sans", Arial, sans-serif; }
.viewer .track { position: absolute; top: 0; right: 0; bottom: 0; border-left: 1px solid #fff; width: 17px; padding: 102px 7px 17px; }
.viewer .track i { height: 100%; }
.sheet { width: 795px; background: #fff; border: solid #777; border-width: 0 1px; padding: 0 52px 0 50px; }
.letterhead { height: 100px; border: 1px solid #000; border-top: 0; display: flex; padding-left: 4px; }
.contact { font-family: Lato, "Noto Sans", sans-serif; font-size: 18px; line-height: 29px; font-variant-ligatures: none; margin-left: 42px; white-space: nowrap; }
.contact h2 { font-size: 29px; line-height: 33px; }
.contact .web { padding-left: 60px; }
.project { margin-top: 4px; height: 101px; border: 1px solid #000; }
.ref { display: flex; justify-content: space-between; height: 19px; line-height: 18px; border-bottom: 1px solid #000; padding: 0 9px 0 5px; }
.project p { padding: 2px 5px; }
.results { margin-top: 4px; border: 1px solid #000; color: #333; }
.liquid h3 { font-size: 18px; line-height: 22px; text-align: center; }
.norm { text-align: center; line-height: 13px; }
.row { display: flex; align-items: flex-start; }
.results text { font: 12px "Liberation Sans", Arial, sans-serif; fill: #333; }
.results table { margin-top: 22px; width: 116px; border-collapse: collapse; border: 1px solid #333; background: #fbfdfc; }
.results th { font-weight: 400; text-align: left; padding: 3px 4px 2px; line-height: 15px; border-bottom: 1px solid #333; white-space: nowrap; }
.results td { padding: 0 4px; line-height: 14px; width: 57px; }
.results td + td { border-left: 1px solid #333; padding-left: 5px; }
.results tbody tr:first-child td { padding-top: 2px; }
.results tbody tr:last-child td { padding-bottom: 2px; }
.casagrande { border-top: 1px solid #000; }
.soft { margin-top: 17px; }
</style>
